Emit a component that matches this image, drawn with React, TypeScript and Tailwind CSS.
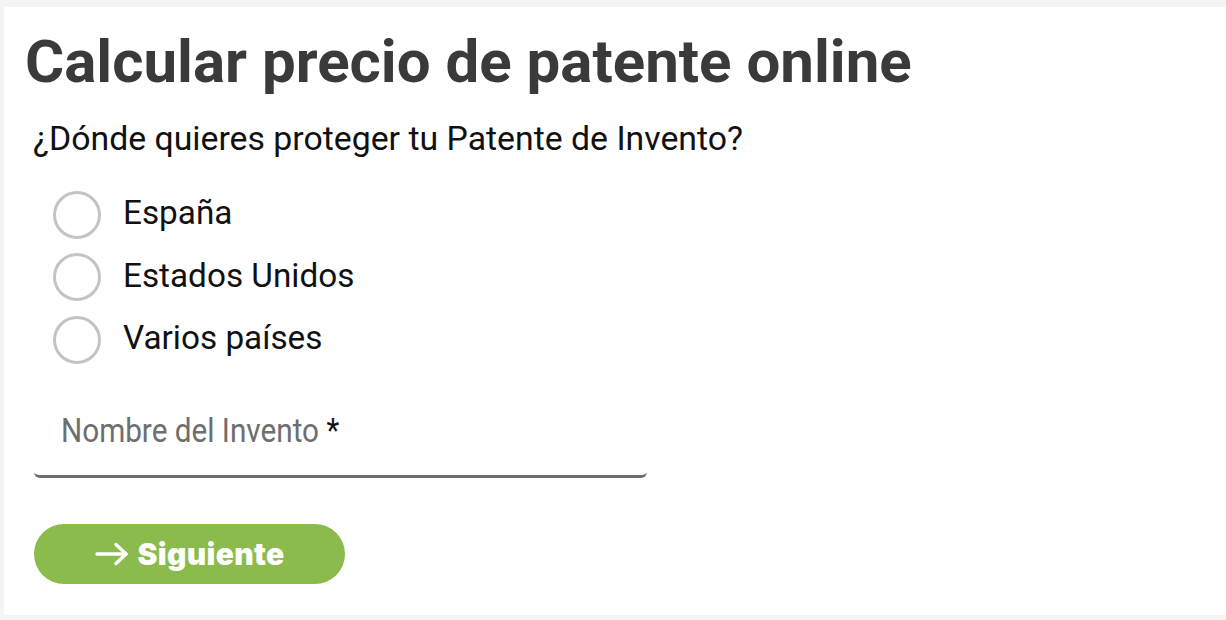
const options = ["España", "Estados Unidos", "Varios países"];

function Arrow() {
  return (
    <svg width="34" height="24" viewBox="0 0 34 24" fill="none" stroke="currentColor" strokeWidth="3.4" strokeLinecap="round" strokeLinejoin="round">
      <path d="M2 12h29" />
      <path d="M21 2.5l10 9.5-10 9.5" />
    </svg>
  );
}

export default function App() {
  return (
    <div className="min-h-[620px] bg-[#f4f4f4] pt-[7px] pb-[5px] pl-[4px] font-['Roboto',sans-serif]">
      <div className="bg-white h-[608px] pl-[21px] pt-[19px]">
        <h1 className="text-[60px] leading-[72px] font-bold text-[#3a3a3a]">
          Calcular precio de patente online
        </h1>

        <p className="mt-[21px] ml-[8px] text-[33.8px] leading-[40px] text-[#111]">
          ¿Dónde quieres proteger tu Patente de Invento?
        </p>

        <div className="mt-[32px] ml-[28px] flex flex-col gap-[15.5px]">
          {options.map((o) => (
            <label key={o} className="flex items-center gap-[22px] h-[47px]">
              <span className="w-[48px] h-[48px] rounded-full border-[3px] border-[#c4c4c4] bg-white shrink-0" />
              <span className="text-[33.3px] leading-[40px] text-[#111] -mt-[3px]">{o}</span>
            </label>
          ))}
        </div>

        <div className="mt-[26px] ml-[9px] w-[613px] h-[89px] border-b-[3px] border-[#6e6e6e] rounded-b-[6px] pl-[27px] pt-[22px]">
          <span className="inline-block origin-left scale-x-[0.9] text-[33px] leading-[40px] text-[#6e6e6e] whitespace-nowrap">
            Nombre del Invento <span className="text-[#111]">*</span>
          </span>
        </div>

        <button className="mt-[46px] ml-[9px] w-[311px] h-[60px] rounded-full bg-[#8bbb4d] flex items-center justify-center gap-[9px] text-white">
          <Arrow />
          <span className="font-['Inter',sans-serif] font-black text-[30px] leading-[36px] tracking-[0.3px]">Siguiente</span>
        </button>
      </div>
    </div>
  );
}
